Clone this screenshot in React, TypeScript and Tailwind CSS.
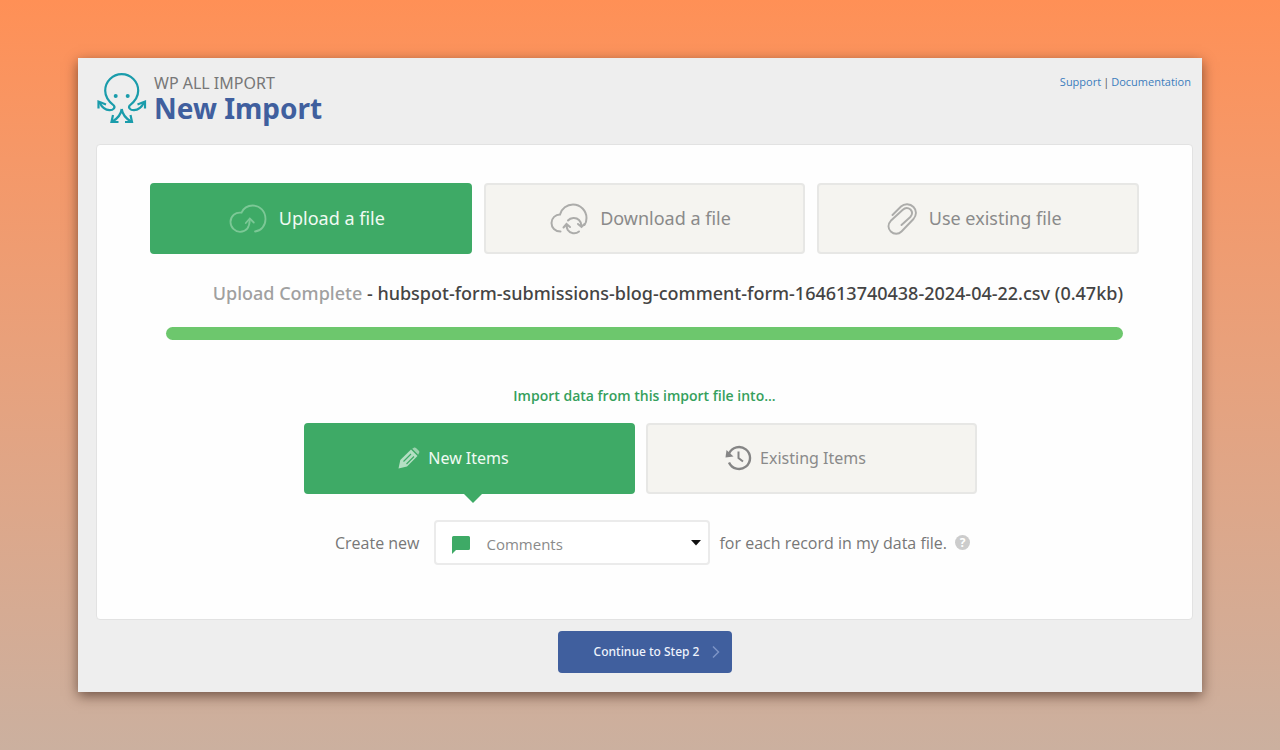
import { useState } from "react";
import type { ReactNode } from "react";
import { clsx } from "clsx";

const sources = [
  { id: "upload", label: "Upload a file", icon: <UploadIcon /> },
  { id: "download", label: "Download a file", icon: <DownloadIcon /> },
  { id: "existing", label: "Use existing file", icon: <ClipIcon /> },
];

const targets = [
  { id: "new", label: "New Items", icon: <PencilIcon /> },
  { id: "existing", label: "Existing Items", icon: <HistoryIcon /> },
];

function OctopusLogo() {
  return (
    <svg width="50" height="52" viewBox="0 0 50 52" fill="none" stroke="#1a9cab" strokeWidth="2.2" className="shrink-0">
      <path d="M2.500 29.500C4.500 33.500 8 37 12.500 37.200C16.500 37.300 18.500 34.500 16.800 32.500C13 29.500 8.200 24.500 8.200 17.700a16.500 16.500 0 0 1 33 0C41.200 24.500 36.500 29.500 32.700 32.500C31 34.500 33 37.300 37 37.200C41.500 37 45 33.500 47 29.500" />
      <path d="M1.500 35.500V28.500L9 31.500M48 35.500V28.500L40.500 31.500" />
      <path d="M24.700 36C24 41.500 20.500 45.500 15.500 48.500M24.700 36C25.500 41.500 29 45.500 34 48.500" />
      <path d="M16 42L14.500 49H21.500M33.500 42L35 49H28" />
      <circle cx="18.700" cy="23" r="2" fill="#1a9cab" stroke="none" />
      <circle cx="30.700" cy="23" r="2" fill="#1a9cab" stroke="none" />
    </svg>
  );
}

function UploadIcon() {
  return (
    <svg width="38" height="30" viewBox="0 0 38 30" fill="none" stroke="#7cc896" strokeWidth="1.800" strokeLinecap="round">
      <path d="M26 27.500C32 27 36.500 22 36.500 15C36.500 7.500 31 1.500 23.800 1.500C18.500 1.500 14.500 4.200 12.500 8.700C6.500 7.700 1.500 12.200 1.500 18C1.500 23.500 6 27.800 11 27.800C17 27.800 20.500 24 20.800 15.500" />
      <path d="M16.800 19L20.800 14.500L24.800 18.500" />
    </svg>
  );
}

function DownloadIcon() {
  return (
    <svg width="38" height="32" viewBox="0 0 38 32" fill="none" stroke="#acacaa" strokeWidth="2" strokeLinecap="round">
      <path d="M10.500 28.500C5 28.500 1.500 24.500 1.500 20C1.500 15 5.500 11.500 10 11.500C11.500 5.500 17 1.500 23 1.500C30.500 1.500 36.500 7.500 36.500 15C36.500 17.500 36 20 34.500 22" />
      <path d="M18 17.500C20.500 14.500 26 14 29 17C30.500 18.500 31.500 20.500 31.500 23M28 21L31.500 24L34.500 21" />
      <path d="M29 28.500C25.500 31.500 20 30.500 17.800 27C17 25.500 16.500 24 16.500 22M13.500 24.500L16.500 21L20 24" />
    </svg>
  );
}

function ClipIcon() {
  return (
    <svg width="30" height="32" viewBox="0 0 30 32" fill="none" stroke="#acacaa" strokeWidth="1.900" strokeLinecap="round">
      <path d="M5.500 12L14 3.500C17.500 .3 23 .5 26.500 4C30 7.500 29.500 12.500 26.500 16L14.500 28.500C11.500 31.500 7 31.500 3.800 28.500C.7 25.500 .7 21 3.800 17.800L15.500 7C18 4.700 21 4.500 23.500 6.500C25.800 9 25.500 11.500 23.300 14L14.500 22" />
    </svg>
  );
}

function PencilIcon() {
  return (
    <svg width="22" height="22" viewBox="0 0 22 22" fill="none">
      <path d="M.5 21.500L2.300 13L13 2.500L19.500 9L9 19.500Z" fill="#b4dfc3" />
      <path d="M14.200 1.800L15.800.8C16.500.3 17.300.3 18 1L20.800 3.800C21.500 4.500 21.500 5.300 21 6L20.200 7.800Z" fill="#9bd3ae" />
      <path d="M5.500 14.500L13 7M8.500 17L16 9.500" stroke="#3eaa66" strokeWidth="1.200" />
    </svg>
  );
}

function HistoryIcon() {
  return (
    <svg width="27" height="26" viewBox="0 0 27 26" fill="none">
      <path d="M4 8.500A11 11 0 1 1 4 17.500" stroke="#858585" strokeWidth="2.400" />
      <path d="M1.500 5L.5 12.500L8.500 11.500Z" fill="#858585" />
      <path d="M13.500 6.500V13L18 16.500" stroke="#858585" strokeWidth="2" />
    </svg>
  );
}

type ChoiceProps = {
  icon: ReactNode;
  label: string;
  active: boolean;
  large?: boolean;
  onClick: () => void;
};

function Choice({ icon, label, active, large, onClick }: ChoiceProps) {
  return (
    <button
      type="button"
      aria-pressed={active}
      onClick={onClick}
      className={clsx(
        "relative flex h-[71px] items-center justify-center rounded border-2",
        large ? "gap-3 pr-2 text-[18px]" : "gap-2 pr-8 pb-[2px] text-base",
        active ? "border-[#3eaa66] bg-[#3eaa66] text-[#f0faf3]" : "border-[#e7e7e5] bg-[#f5f4f0] text-[#8a8a8a]"
      )}
    >
      {icon}
      <span>{label}</span>
      {active && !large && (
        <svg width="22" height="11" viewBox="0 0 22 11" className="absolute top-full left-1/2 -ml-2">
          <path d="M0 0H22L11 11Z" fill="#3eaa66" />
        </svg>
      )}
    </button>
  );
}

export default function App() {
  const [source, setSource] = useState("upload");
  const [target, setTarget] = useState("new");

  return (
    <div className="min-h-screen bg-linear-to-b from-[#ff9056] to-[#cbb09f] px-[78px] py-[58px] font-['Noto_Sans','Open_Sans',sans-serif]">
      <main className="bg-[#eeeeee] pt-3 pr-[9px] pb-[19px] pl-[18px] shadow-[0_4px_12px_rgba(50,25,15,0.6)]">
        {/* Header */}
        <header className="flex h-[74px] items-start justify-between">
          <div className="flex items-start gap-[7px] pt-[3px] pl-px">
            <OctopusLogo />
            <div>
              <p className="text-base leading-5 text-[#777777]">WP ALL IMPORT</p>
              <h1 className="text-[28px] leading-[30px] font-bold text-[#405f9e]">New Import</h1>
            </div>
          </div>
          <nav className="flex gap-[2px] pt-1 pr-[2px] font-['Open_Sans','Noto_Sans',sans-serif] text-[11px] leading-4 text-[#555555]">
            <a href="#support" className="text-[#3b7dbd]">Support</a>
            <span>|</span>
            <a href="#documentation" className="text-[#3b7dbd]">Documentation</a>
          </nav>
        </header>

        <section className="rounded border border-[#e2e2e2] bg-[#fefefe] px-[53px] pt-[38px] pb-[54px]">
          {/* Where the file comes from */}
          <div className="grid grid-cols-3 gap-3">
            {sources.map((item) => (
              <Choice
                key={item.id}
                large
                icon={item.icon}
                label={item.label}
                active={source === item.id}
                onClick={() => setSource(item.id)}
              />
            ))}
          </div>

          {/* Upload status */}
          <div className="mt-[27px] pr-4 pl-4">
            <p className="text-right text-[18px] leading-6 font-medium text-[#444444]">
              <span className="text-[#a0a0a0]">Upload Complete</span> - hubspot-form-submissions-blog-comment-form-164613740438-2024-04-22.csv (0.47kb)
            </p>
            <div role="progressbar" aria-label="Upload" aria-valuenow={100} className="mt-[22px] h-[13px] rounded-full bg-[#6dc76d]" />
          </div>

          {/* What the records become */}
          <h2 className="mt-[46px] text-center font-['Open_Sans','Noto_Sans',sans-serif] text-[14px] leading-5 font-semibold text-[#35a05c]">
            Import data from this import file into...
          </h2>
          <div className="mt-[17px] flex justify-center pr-2">
            <div className="grid w-full max-w-[673px] grid-cols-2 gap-[11px]">
              {targets.map((item) => (
                <Choice
                  key={item.id}
                  icon={item.icon}
                  label={item.label}
                  active={target === item.id}
                  onClick={() => setTarget(item.id)}
                />
              ))}
            </div>
          </div>

          <div className="mt-[26px] flex items-center justify-center pl-4 font-['Open_Sans','Noto_Sans',sans-serif] text-base text-[#777777]">
            <label htmlFor="record-type">Create new</label>
            <div className="relative mr-[9px] ml-[15px]">
              <select
                id="record-type"
                className="h-[45px] w-[276px] appearance-none rounded border-2 border-[#ebebeb] bg-white pt-1 pl-[50px] text-[15px] text-[#8a8a8a]"
              >
                <option>Comments</option>
                <option>Posts</option>
                <option>Pages</option>
              </select>
              <svg width="18" height="18" viewBox="0 0 18 18" className="pointer-events-none absolute top-4 left-[18px]">
                <path d="M1.500 0H16.500Q18 0 18 1.500V12.500Q18 14 16.500 14H4L0 18V1.500Q0 0 1.500 0Z" fill="#3eaa66" />
              </svg>
              <svg width="10" height="6" viewBox="0 0 10 6" className="pointer-events-none absolute top-5 right-[9px]">
                <path d="M0 0H10L5 5.500Z" fill="#111111" />
              </svg>
            </div>
            <span>for each record in my data file.</span>
            <button
              type="button"
              aria-label="Help"
              className="ml-2 flex size-[15px] items-center justify-center rounded-full bg-[#cccccc] text-[12px] leading-none font-bold text-white"
            >
              ?
            </button>
          </div>
        </section>

        <div className="mt-[11px] flex justify-center">
          <button
            type="button"
            className="flex h-[42px] w-[174px] items-center justify-end gap-3 rounded-sm bg-[#405f9e] pr-3 text-[12px] font-medium text-[#eef3fc]"
          >
            Continue to Step 2
            <svg width="8" height="12" viewBox="0 0 8 12" fill="none" stroke="#7c94c6" strokeWidth="1.500">
              <path d="M1 .5L6.500 6L1 11.500" />
            </svg>
          </button>
        </div>
      </main>
    </div>
  );
}
